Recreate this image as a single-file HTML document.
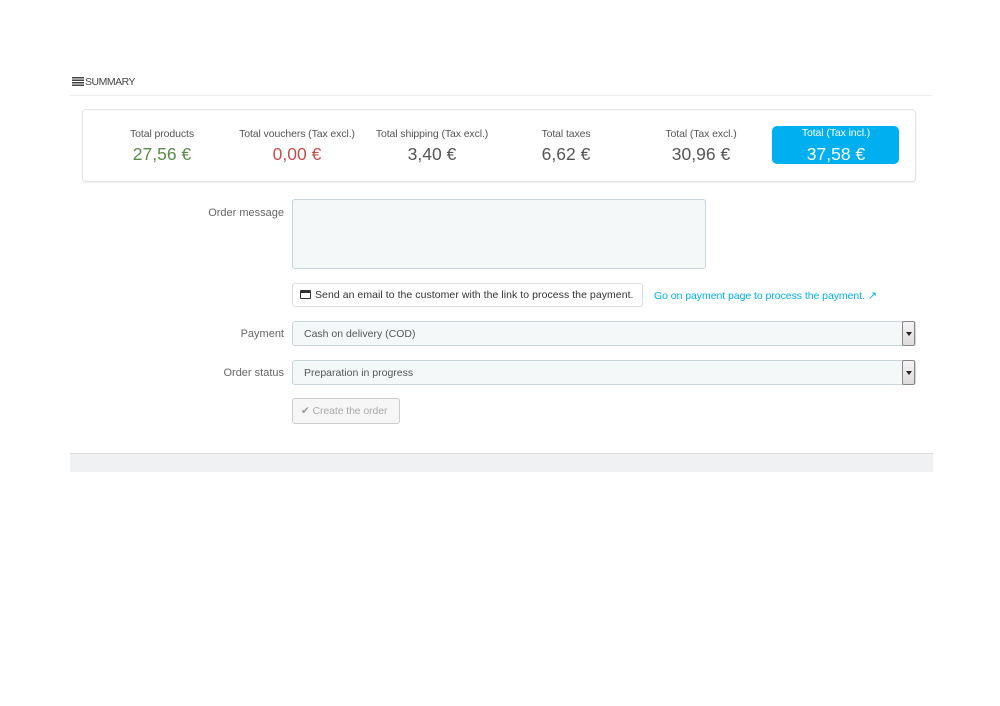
<!DOCTYPE html>
<html><head><meta charset="utf-8"><style>
body{margin:0;width:1000px;height:706px;background:#fff;font-family:"Liberation Sans",sans-serif;color:#555;position:relative;overflow:hidden}
.a{position:absolute;white-space:nowrap}
.lab{font-size:10.5px;color:#555;text-align:center;width:140px;letter-spacing:-0.1px}
.val{font-size:17.5px;text-align:center;width:140px;color:#555}
.fl{font-size:11px;color:#666;text-align:right;width:200px;letter-spacing:0px}
.sel{border:1px solid #c7d6db;background:#f5f8f9;border-radius:3px;font-size:10.5px;color:#555;box-sizing:border-box}
.arr{position:absolute;right:0;top:-1px;width:13px;height:25px;border:1px solid #888;background:linear-gradient(#f4f4f4,#ddd);box-sizing:border-box;border-radius:2px}
.arr:after{content:"";position:absolute;left:3px;top:10px;border-left:3px solid transparent;border-right:3px solid transparent;border-top:4px solid #222}
</style></head><body>
<div class="a" style="left:72px;top:77px;width:12px;height:9px;background:repeating-linear-gradient(#444 0 1.5px,transparent 1.5px 2.5px)"></div>
<div class="a" style="left:85px;top:76px;font-size:10.5px;color:#444;letter-spacing:-0.5px">SUMMARY</div>
<div class="a" style="left:70px;top:95px;width:862px;height:1px;background:#eee"></div>
<div class="a" style="left:82px;top:109px;width:834px;height:73px;border:1px solid #e4e4e4;border-radius:4px;box-sizing:border-box;box-shadow:0 1px 1px #eee"></div>
<div class="a" style="left:772px;top:126px;width:127px;height:38px;background:#00aff0;border-radius:5px"></div>
<div class="a lab" style="left:92px;top:128px">Total products</div>
<div class="a val" style="left:92px;top:144px;color:#5a8a4a">27,56 €</div>
<div class="a lab" style="left:227px;top:128px">Total vouchers (Tax excl.)</div>
<div class="a val" style="left:227px;top:144px;color:#c0504d">0,00 €</div>
<div class="a lab" style="left:362px;top:128px">Total shipping (Tax excl.)</div>
<div class="a val" style="left:362px;top:144px">3,40 €</div>
<div class="a lab" style="left:496px;top:128px">Total taxes</div>
<div class="a val" style="left:496px;top:144px">6,62 €</div>
<div class="a lab" style="left:631px;top:128px">Total (Tax excl.)</div>
<div class="a val" style="left:631px;top:144px">30,96 €</div>
<div class="a lab" style="left:766px;top:127px;color:#fff">Total (Tax incl.)</div>
<div class="a val" style="left:766px;top:144px;color:#fff">37,58 €</div>

<div class="a fl" style="left:84px;top:207px">Order message</div>
<div class="a sel" style="left:292px;top:199px;width:414px;height:70px"></div>

<div class="a" style="left:292px;top:283px;width:351px;height:24px;border:1px solid #ddd;border-radius:3px;box-sizing:border-box"></div>
<div class="a" style="left:300px;top:290px;width:11px;height:9px;border:1px solid #333;box-sizing:border-box;border-top-width:3px;border-radius:1px"></div>
<div class="a" style="left:315px;top:289px;font-size:10.5px;color:#333;letter-spacing:0.05px">Send an email to the customer with the link to process the payment.</div>
<div class="a" style="left:654px;top:289px;font-size:10.5px;color:#00aff0;letter-spacing:-0.05px">Go on payment page to process the payment. <span style="font-size:11px">&#x2197;</span></div>

<div class="a fl" style="left:84px;top:328px">Payment</div>
<div class="a sel" style="left:292px;top:321px;width:624px;height:25px"><span class="a" style="left:11px;top:6px">Cash on delivery (COD)</span><div class="arr"></div></div>
<div class="a fl" style="left:84px;top:367px">Order status</div>
<div class="a sel" style="left:292px;top:360px;width:624px;height:25px"><span class="a" style="left:11px;top:6px">Preparation in progress</span><div class="arr"></div></div>

<div class="a" style="left:292px;top:398px;width:108px;height:26px;border:1px solid #ccc;border-radius:3px;background:#f6f6f6;box-sizing:border-box;font-size:10.5px;color:#aaa;padding:6px 0 0 8px;letter-spacing:-0.1px"><span style="color:#999">&#10004;</span> Create the order</div>

<div class="a" style="left:70px;top:453px;width:863px;height:18px;background:#eff1f2;border-top:1px solid #dcdcdc"></div>
</body></html>
